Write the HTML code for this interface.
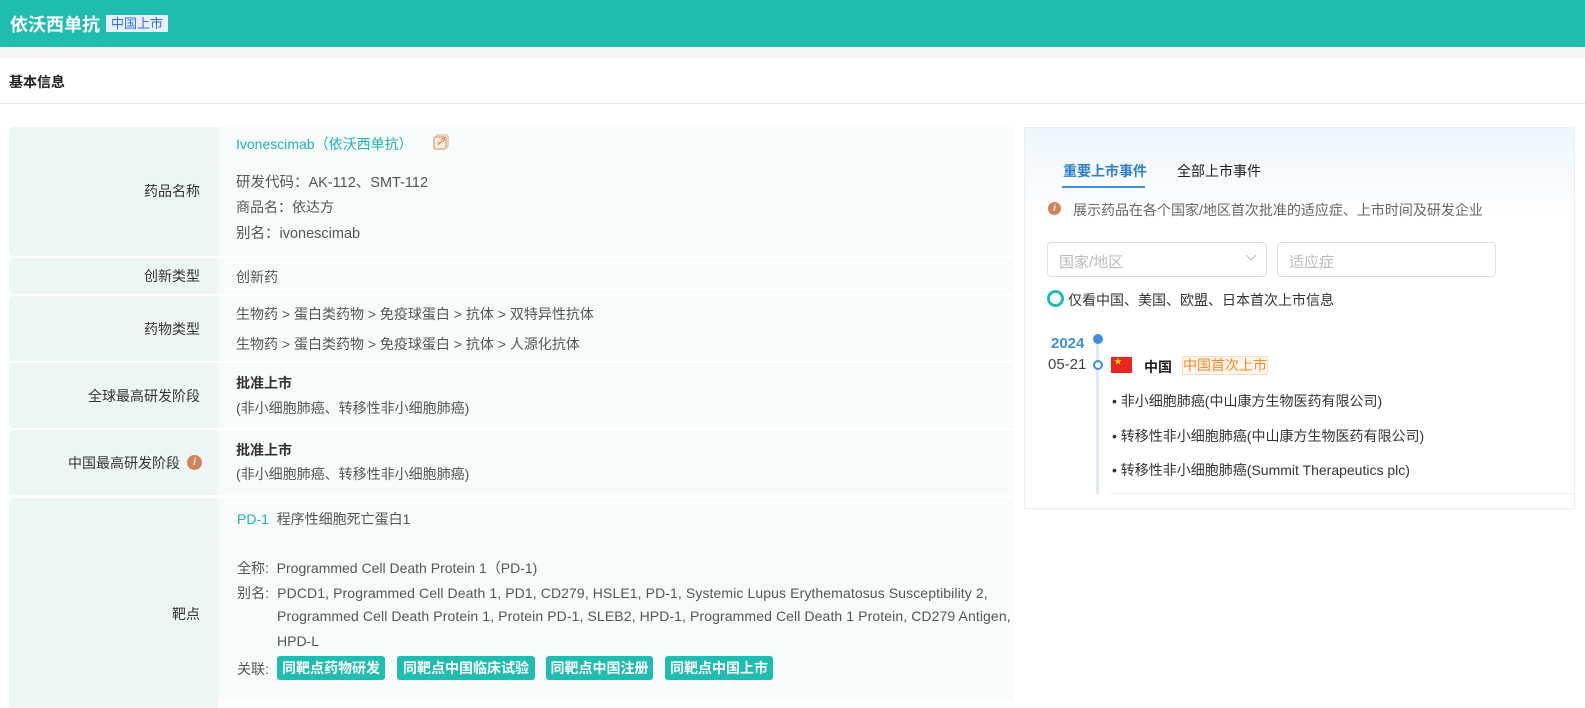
<!DOCTYPE html>
<html><head><meta charset="utf-8"><style>
*{margin:0;padding:0;box-sizing:border-box}
body{width:1585px;height:701px;overflow:hidden;background:#fff;font-family:"Liberation Sans","Noto Sans CJK SC",sans-serif;font-size:14px;color:#555;position:relative}
.a{position:absolute;white-space:nowrap}
.lab{position:absolute;left:9px;width:209px;background:#eef6f5;border-radius:4px 0 0 4px}
.val{position:absolute;left:218px;width:796px;background:#f8fbfb}
.lt{position:absolute;right:18px;color:#333;font-size:14px;transform:translateY(-50%)}
.tag{position:absolute;top:656px;height:24px;line-height:24px;background:#1fbcb0;color:#fff;border-radius:3px;text-align:center;font-size:14px;font-weight:bold}
</style></head><body>
<div class="a" style="left:0;top:0;width:1585px;height:47px;background:#1fbcb0"></div>
<div class="a" style="left:10px;top:11px;color:#fff;font-size:18px;font-weight:bold">依沃西单抗</div>
<div class="a" style="left:106px;top:15px;width:62px;height:17px;background:#e8f0fe;color:#2f6fe0;font-size:13px;line-height:17px;text-align:center">中国上市</div>
<div class="a" style="left:0;top:47px;width:1585px;height:11px;background:#f5f6f8"></div>
<div class="a" style="left:9px;top:72px;color:#222;font-size:14px;font-weight:bold">基本信息</div>
<div class="a" style="left:0;top:103px;width:1585px;height:1px;background:#e6e8eb"></div>

<div class="lab" style="top:127px;height:129px"><span class="lt" style="top:64px">药品名称</span></div>
<div class="val" style="top:127px;height:34px"></div>
<div class="val" style="top:162px;height:94px"></div>
<div class="a" style="left:236px;top:134px;color:#1fb5a9;font-size:14px">Ivonescimab（依沃西单抗）</div>
<svg class="a" style="left:433px;top:134px" width="16" height="16" viewBox="0 0 16 16"><rect x="3" y="1" width="12" height="12" rx="1.5" fill="none" stroke="#e8b994" stroke-width="1.3"/><rect x="1" y="3" width="12" height="12" rx="1.5" fill="#fbeee3" stroke="#e0a070" stroke-width="1.3"/><path d="M5 11l4-4M4.5 9.5l1.5-1.5M8 6l1.5-1.5a1.2 1.2 0 0 1 1.7 1.7L9.7 7.7" stroke="#d98a55" stroke-width="1.2" fill="none"/></svg>
<div class="a" style="left:236px;top:171px;font-size:14.5px">研发代码：AK-112、SMT-112</div>
<div class="a" style="left:236px;top:197px">商品名：依达方</div>
<div class="a" style="left:236px;top:222px;font-size:14.5px">别名：ivonescimab</div>

<div class="lab" style="top:258px;height:36px"><span class="lt" style="top:18px">创新类型</span></div>
<div class="val" style="top:258px;height:36px"></div>
<div class="a" style="left:236px;top:267px">创新药</div>

<div class="lab" style="top:296px;height:65px"><span class="lt" style="top:33px">药物类型</span></div>
<div class="val" style="top:296px;height:65px"></div>
<div class="a" style="left:236px;top:304px">生物药 &gt; 蛋白类药物 &gt; 免疫球蛋白 &gt; 抗体 &gt; 双特异性抗体</div>
<div class="a" style="left:236px;top:334px">生物药 &gt; 蛋白类药物 &gt; 免疫球蛋白 &gt; 抗体 &gt; 人源化抗体</div>

<div class="lab" style="top:363px;height:65px"><span class="lt" style="top:33px">全球最高研发阶段</span></div>
<div class="val" style="top:363px;height:65px"></div>
<div class="a" style="left:236px;top:373px;color:#333;font-weight:bold">批准上市</div>
<div class="a" style="left:236px;top:398px">(非小细胞肺癌、转移性非小细胞肺癌)</div>

<div class="lab" style="top:430px;height:65px"><span class="lt" style="top:33px;right:38px">中国最高研发阶段</span><span class="a" style="left:178px;top:25px;width:15px;height:15px;border-radius:50%;background:#d4825a;color:#fff;font-size:10px;font-style:italic;font-weight:bold;text-align:center;line-height:15px">i</span></div>
<div class="val" style="top:430px;height:65px"></div>
<div class="a" style="left:236px;top:440px;color:#333;font-weight:bold">批准上市</div>
<div class="a" style="left:236px;top:464px">(非小细胞肺癌、转移性非小细胞肺癌)</div>

<div class="lab" style="top:498px;height:210px"><span class="lt" style="top:116px">靶点</span></div>
<div class="val" style="top:498px;height:42px"></div>
<div class="val" style="top:541px;height:160px"></div>
<div class="a" style="left:237px;top:509px"><span style="color:#1fb5a9">PD-1</span>&nbsp;&nbsp;程序性细胞死亡蛋白1</div>
<div class="a" style="left:237px;top:558px">全称:&nbsp;&nbsp;Programmed Cell Death Protein 1（PD-1)</div>
<div class="a" style="left:237px;top:583px;letter-spacing:0.1px">别名:&nbsp;&nbsp;PDCD1, Programmed Cell Death 1, PD1, CD279, HSLE1, PD-1, Systemic Lupus Erythematosus Susceptibility 2,</div>
<div class="a" style="left:277px;top:608px;letter-spacing:0.1px">Programmed Cell Death Protein 1, Protein PD-1, SLEB2, HPD-1, Programmed Cell Death 1 Protein, CD279 Antigen,</div>
<div class="a" style="left:277px;top:633px">HPD-L</div>
<div class="a" style="left:237px;top:659px">关联:</div>
<div class="tag" style="left:277px;width:108px">同靶点药物研发</div>
<div class="tag" style="left:397px;width:138px">同靶点中国临床试验</div>
<div class="tag" style="left:546px;width:107px">同靶点中国注册</div>
<div class="tag" style="left:665px;width:108px">同靶点中国上市</div>

<div class="a" style="left:1024px;top:127px;width:551px;height:382px;border:1px solid #eceef0;background:linear-gradient(#edf6fe 0,#fff 90px)"></div>
<div class="a" style="left:1063px;top:161px;color:#2d7fd0;font-weight:bold;font-size:14px">重要上市事件</div>
<div class="a" style="left:1062px;top:186px;width:83px;height:2px;background:#3d8fdc"></div>
<div class="a" style="left:1177px;top:161px;color:#222;font-size:14px">全部上市事件</div>
<div class="a" style="left:1048px;top:202px;width:13px;height:13px;border-radius:50%;background:#d4825a;color:#fff;font-size:9px;font-style:italic;font-weight:bold;text-align:center;line-height:13px">i</div>
<div class="a" style="left:1073px;top:200px;color:#666">展示药品在各个国家/地区首次批准的适应症、上市时间及研发企业</div>
<div class="a" style="left:1047px;top:242px;width:220px;height:35px;border:1px solid #dcdfe6;border-radius:4px;background:#fff"></div>
<div class="a" style="left:1059px;top:251px;color:#bbb;font-size:15px">国家/地区</div>
<svg class="a" style="left:1245px;top:254px" width="12" height="8" viewBox="0 0 12 8"><path d="M1 1l5 5 5-5" stroke="#c0c4cc" fill="none" stroke-width="1.2"/></svg>
<div class="a" style="left:1277px;top:242px;width:219px;height:35px;border:1px solid #dcdfe6;border-radius:4px;background:#fff"></div>
<div class="a" style="left:1289px;top:251px;color:#bbb;font-size:15px">适应症</div>
<div class="a" style="left:1047px;top:290px;width:17px;height:17px;border-radius:50%;border:3px solid #1fbcb0"></div>
<div class="a" style="left:1068px;top:290px;color:#333">仅看中国、美国、欧盟、日本首次上市信息</div>
<div class="a" style="left:1096px;top:339px;width:3px;height:155px;background:#dfeaf6"></div>
<div class="a" style="left:1093px;top:334px;width:10px;height:10px;border-radius:50%;background:#3d8fdc"></div>
<div class="a" style="left:1051px;top:335px;color:#3d8fdc;font-weight:bold;font-size:15px">2024</div>
<div class="a" style="left:1093px;top:360px;width:10px;height:10px;border-radius:50%;border:2.5px solid #3d8fdc;background:#fff"></div>
<div class="a" style="left:1048px;top:356px;color:#444;font-size:15px">05-21</div>
<div class="a" style="left:1111px;top:357px;width:21px;height:16px;background:#e8261d;color:#ffde00;font-size:8px;line-height:10px;padding-left:3px">★</div>
<div class="a" style="left:1144px;top:357px;color:#222;font-weight:bold">中国</div>
<div class="a" style="left:1182px;top:356px;width:86px;height:19px;border:1px solid #fcd9bd;background:#fff7f0;color:#f6891f;font-size:14px;line-height:17px;text-align:center">中国首次上市</div>
<div class="a" style="left:1112px;top:391px;color:#333">• 非小细胞肺癌(中山康方生物医药有限公司)</div>
<div class="a" style="left:1112px;top:426px;color:#333">• 转移性非小细胞肺癌(中山康方生物医药有限公司)</div>
<div class="a" style="left:1112px;top:460px;color:#333">• 转移性非小细胞肺癌(Summit Therapeutics plc)</div>
<div class="a" style="left:1110px;top:493px;width:464px;height:1px;background:#eceef0"></div>
</body></html>
